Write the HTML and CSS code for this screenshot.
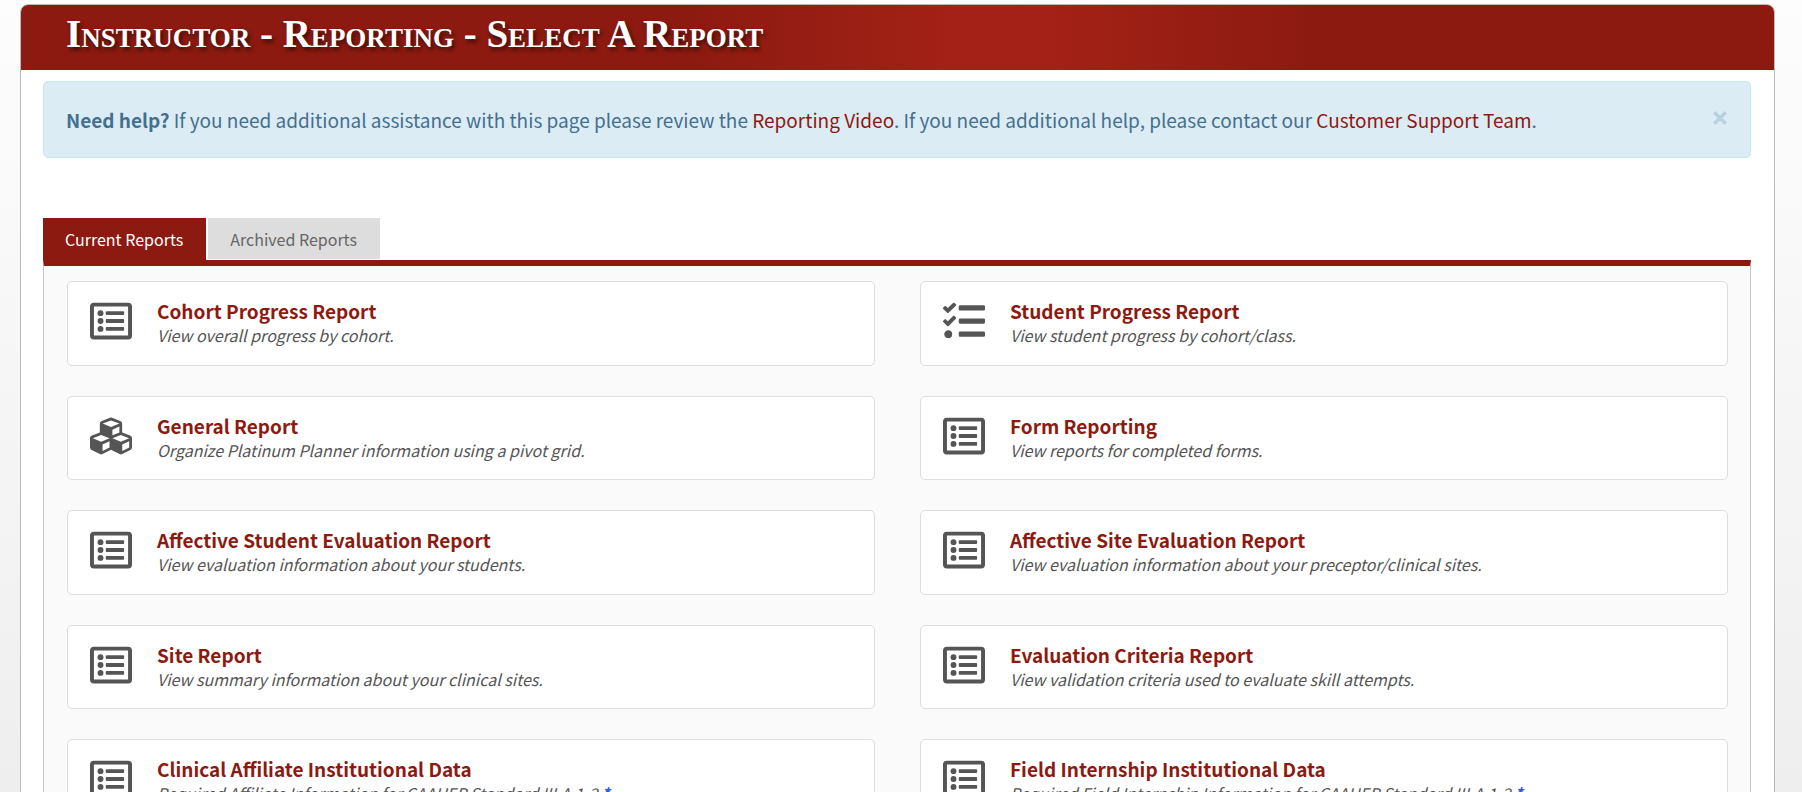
FILE: index.html
```html
<!DOCTYPE html>
<html lang="en">
<head>
    <meta charset="UTF-8">
    <meta name="viewport" content="width=device-width, initial-scale=1.0">
    <title>Instructor - Reporting - Select A Report</title>
    <link rel="stylesheet" href="styles.css">
</head>
<body>
    <svg class="sprite" aria-hidden="true">
        <symbol id="icon-list" viewBox="0 0 512 512">
            <rect x="24" y="56" width="464" height="400" rx="24" fill="none" stroke="currentColor" stroke-width="48"/>
            <circle cx="128" cy="160" r="36"/>
            <circle cx="128" cy="256" r="36"/>
            <circle cx="128" cy="352" r="36"/>
            <rect x="192" y="136" width="224" height="48" rx="12"/>
            <rect x="192" y="232" width="224" height="48" rx="12"/>
            <rect x="192" y="328" width="224" height="48" rx="12"/>
        </symbol>
        <symbol id="icon-tasks" viewBox="0 0 512 512">
            <path d="M139.61 35.5a12 12 0 0 0-17 0L58.93 98.81l-22.7-22.12a12 12 0 0 0-17 0L3.53 92.41a12 12 0 0 0 0 17l47.59 47.4a12.78 12.78 0 0 0 17.61 0l15.59-15.62L156.52 69a12.09 12.09 0 0 0 .09-17zm0 159.19a12 12 0 0 0-17 0l-63.68 63.72-22.7-22.1a12 12 0 0 0-17 0L3.53 252a12 12 0 0 0 0 17L51 316.5a12.77 12.77 0 0 0 17.6 0l15.7-15.69 72.2-72.22a12 12 0 0 0 .09-16.9zM64 368c-26.49 0-48.59 21.5-48.59 48S37.53 464 64 464a48 48 0 0 0 0-96zm432 16H208a16 16 0 0 0-16 16v32a16 16 0 0 0 16 16h288a16 16 0 0 0 16-16v-32a16 16 0 0 0-16-16zm0-320H208a16 16 0 0 0-16 16v32a16 16 0 0 0 16 16h288a16 16 0 0 0 16-16V80a16 16 0 0 0-16-16zm0 160H208a16 16 0 0 0-16 16v32a16 16 0 0 0 16 16h288a16 16 0 0 0 16-16v-32a16 16 0 0 0-16-16z"/>
        </symbol>
        <symbol id="icon-cubes" viewBox="0 0 512 512">
            <path d="M488.6 250.2L392 214V105.5c0-15-9.3-28.4-23.4-33.7l-100-37.5c-8.1-3.1-17.1-3.1-25.3 0l-100 37.5c-14.1 5.3-23.4 18.7-23.4 33.7V214l-96.6 36.2C9.3 255.5 0 268.9 0 283.9V394c0 13.6 7.7 26.1 19.9 32.2l100 50c10.1 5.1 22.1 5.1 32.2 0l103.9-52 103.9 52c10.1 5.1 22.1 5.1 32.2 0l100-50c12.2-6.1 19.9-18.6 19.9-32.2V283.9c0-15-9.3-28.4-23.4-33.7zM358 214.8l-85 31.9v-68.2l85-37v73.3zM154 104.1l102-38.2 102 38.2v.6l-102 41.4-102-41.4v-.6zm84 291.1l-85 42.5v-79.1l85-38.8v75.4zm0-112l-102 41.4-102-41.4v-.6l102-38.2 102 38.2v.6zm240 112l-85 42.5v-79.1l85-38.8v75.4zm0-112l-102 41.4-102-41.4v-.6l102-38.2 102 38.2v.6z"/>
        </symbol>
    </svg>

    <main class="panel">
        <header class="panel-heading">
            <h1>Instructor - Reporting - Select A Report</h1>
        </header>

        <div class="panel-body">
            <div class="alert">
                <p><strong>Need help?</strong> If you need additional assistance with this page please review the <a href="#">Reporting Video</a>. If you need additional help, please contact our <a href="#">Customer Support Team</a>.</p>
                <button type="button" class="close" aria-label="Close">
                    <svg viewBox="0 0 14 14"><path d="M2 2l10 10M12 2L2 12"/></svg>
                </button>
            </div>

            <div class="tabs" role="tablist">
                <button type="button" class="tab active" role="tab" aria-selected="true">Current Reports</button>
                <button type="button" class="tab" role="tab" aria-selected="false">Archived Reports</button>
            </div>

            <div class="reports">
                <a href="#" class="report">
                    <svg class="icon"><use href="#icon-list"/></svg>
                    <div>
                        <h2>Cohort Progress Report</h2>
                        <p>View overall progress by cohort.</p>
                    </div>
                </a>
                <a href="#" class="report">
                    <svg class="icon"><use href="#icon-tasks"/></svg>
                    <div>
                        <h2>Student Progress Report</h2>
                        <p>View student progress by cohort/class.</p>
                    </div>
                </a>
                <a href="#" class="report">
                    <svg class="icon"><use href="#icon-cubes"/></svg>
                    <div>
                        <h2>General Report</h2>
                        <p>Organize Platinum Planner information using a pivot grid.</p>
                    </div>
                </a>
                <a href="#" class="report">
                    <svg class="icon"><use href="#icon-list"/></svg>
                    <div>
                        <h2>Form Reporting</h2>
                        <p>View reports for completed forms.</p>
                    </div>
                </a>
                <a href="#" class="report">
                    <svg class="icon"><use href="#icon-list"/></svg>
                    <div>
                        <h2>Affective Student Evaluation Report</h2>
                        <p>View evaluation information about your students.</p>
                    </div>
                </a>
                <a href="#" class="report">
                    <svg class="icon"><use href="#icon-list"/></svg>
                    <div>
                        <h2>Affective Site Evaluation Report</h2>
                        <p>View evaluation information about your preceptor/clinical sites.</p>
                    </div>
                </a>
                <a href="#" class="report">
                    <svg class="icon"><use href="#icon-list"/></svg>
                    <div>
                        <h2>Site Report</h2>
                        <p>View summary information about your clinical sites.</p>
                    </div>
                </a>
                <a href="#" class="report">
                    <svg class="icon"><use href="#icon-list"/></svg>
                    <div>
                        <h2>Evaluation Criteria Report</h2>
                        <p>View validation criteria used to evaluate skill attempts.</p>
                    </div>
                </a>
                <a href="#" class="report">
                    <svg class="icon"><use href="#icon-list"/></svg>
                    <div>
                        <h2>Clinical Affiliate Institutional Data</h2>
                        <p>Required Affiliate Information for CAAHEP Standard III.A.1-2 <span class="note">*</span></p>
                    </div>
                </a>
                <a href="#" class="report">
                    <svg class="icon"><use href="#icon-list"/></svg>
                    <div>
                        <h2>Field Internship Institutional Data</h2>
                        <p>Required Field Internship Information for CAAHEP Standard III.A.1-2 <span class="note">*</span></p>
                    </div>
                </a>
            </div>
        </div>
    </main>
</body>
</html>
```

FILE: styles.css
```css
* {
    margin: 0;
    padding: 0;
    box-sizing: border-box;
}

html {
    min-height: 100%;
    background: linear-gradient(#fdfdfd, #ececec);
}

body {
    padding: 4px 27px 30px 20px;
    font-family: 'Noto Sans CJK SC', 'Open Sans', sans-serif;
    color: #555;
}

.sprite {
    display: none;
}

.panel {
    background: #fff;
    border: 1px solid #bbb;
    border-radius: 8px;
    overflow: hidden;
}

.panel-heading {
    padding: 9px 45px 16px;
    background: linear-gradient(90deg, #8c1a10 38%, #a32116 53%, #a32116 59%, #8c1a10 74%);
}

.panel-heading h1 {
    font-family: 'Liberation Serif', serif;
    font-size: 39px;
    line-height: 40px;
    font-variant: small-caps;
    color: #fff;
    text-shadow: 2px 3px 4px rgba(0, 0, 0, 0.6);
}

.panel-body {
    padding: 11px 23px 30px 22px;
}

.alert {
    display: flex;
    justify-content: space-between;
    align-items: flex-start;
    padding: 22px;
    margin-bottom: 60px;
    background: #dcecf5;
    border: 1px solid #c5e6ee;
    border-radius: 5px;
    color: #43708f;
    font-size: 19px;
    line-height: 31px;
}

.alert a {
    color: #8c1a10;
    text-decoration: none;
}

.close {
    padding: 6px 0;
    border: none;
    background: transparent;
    cursor: pointer;
}

.close svg {
    display: block;
    width: 16px;
    height: 16px;
    fill: none;
    stroke: #bbd1df;
    stroke-width: 3;
}

.tabs {
    display: flex;
    align-items: flex-start;
    gap: 2px;
}

.tab {
    height: 41px;
    padding: 0 23px 0 22px;
    border: none;
    background: #ddd;
    color: #666;
    font-family: inherit;
    font-size: 16px;
    cursor: pointer;
}

.tab.active {
    height: 42px;
    background: #8c1a10;
    color: #fff;
}

.reports {
    display: grid;
    grid-template-columns: 1fr 1fr;
    gap: 30px 45px;
    padding: 15px 22px 30px 23px;
    background: #fafafa;
    border: 1px solid #c4c4c4;
    border-top: 6px solid #8c1a10;
}

.report {
    display: flex;
    gap: 25px;
    padding: 17px 22px 16px;
    background: #fff;
    border: 1px solid #ddd;
    border-radius: 5px;
    text-decoration: none;
    color: #555;
}

.report:hover {
    background: #f5f5f5;
}

.icon {
    width: 42px;
    height: 42px;
    margin-top: 1px;
    flex: none;
    color: #555;
    fill: currentColor;
}

.report h2 {
    font-size: 19px;
    line-height: 24px;
    font-weight: bold;
    color: #8c1a10;
}

.report p {
    font-size: 16px;
    line-height: 1.6;
    font-style: italic;
}

.note {
    color: #2b5be8;
    font-weight: bold;
}

@media (max-width: 900px) {
    .reports {
        grid-template-columns: 1fr;
    }
}
```
